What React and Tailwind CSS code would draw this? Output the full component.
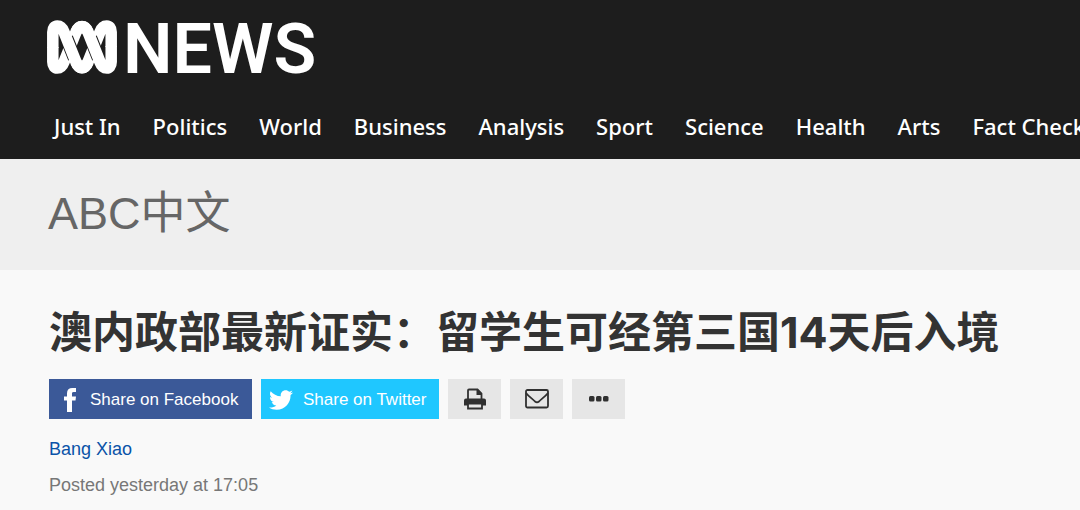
import { FaTwitter } from "react-icons/fa";

const links = ["Just In", "Politics", "World", "Business", "Analysis", "Sport", "Science", "Health", "Arts", "Fact Check"];

function Worm() {
  return (
    <svg viewBox="0 0 70 54" className="h-[54px] w-[70px] shrink-0" fill="none" strokeWidth="11.500" stroke="#fff" aria-hidden="true">
      <path d="M5.800 27V42C5.800 50 14 50 17 42L29 12C32 5 38 5 41 12" />
      <path d="M64.200 27V12C64.200 4 56 4 53 12L41 42C38 49.500 32 49.500 29 42" />
      <path stroke="#1d1d1d" strokeWidth="13.500" d="M19.500 18L27.500 38M43.500 18L51.500 38" />
      <path d="M5.800 28V12C5.800 4 14 4 17 12L29 42C32 49.500 38 49.500 41 42" />
      <path d="M29 12C32 4.500 38 4.500 41 12L53 42C56 50 64.200 50 64.200 42V26" />
    </svg>
  );
}

function FacebookIcon() {
  return (
    <svg viewBox="0 0 12 24" className="h-6 w-3" fill="#fff" aria-hidden="true">
      <path d="M12 0V4H9.500C8.200 4 8 4.700 8 5.800V8.500H12L11.500 12.500H8V24H3V12.500H0V8.500H3V5.200C3 1.800 5 0 8.300 0Z" />
    </svg>
  );
}

function PrintIcon() {
  return (
    <svg viewBox="0 0 24 24" className="h-6 w-6" fill="none" stroke="#303030" strokeWidth="1.800" aria-hidden="true">
      <path d="M5 12V3.500Q5 2.500 6 2.500H14.500L18.500 6.500V12" />
      <path fill="#303030" stroke="none" d="M13.500 2.500H15L19 6.500V8H13.500Z" />
      <path fill="#303030" stroke="none" d="M3 11.500H21A2 2 0 0 1 23 13.500V18.500H1V13.500A2 2 0 0 1 3 11.500Z" />
      <path fill="#e6e6e6" d="M5 16.500H19V21.500H5Z" />
    </svg>
  );
}

function MailIcon() {
  return (
    <svg viewBox="0 0 24 20" className="h-5 w-6" fill="none" stroke="#303030" strokeWidth="1.800" aria-hidden="true">
      <rect x="1" y="1" width="22" height="17.500" rx="1.500" />
      <path d="M1 4C4 8 8 10 10 12.500Q12 14 14 12.500C16 10 20 8 23 4" />
    </svg>
  );
}

function DotsIcon() {
  return (
    <svg viewBox="0 0 20 6" className="h-1.5 w-5" fill="#303030" aria-hidden="true">
      <rect x="0" y="0" width="5.500" height="5.500" rx="1.500" />
      <rect x="7" y="0" width="5.500" height="5.500" rx="1.500" />
      <rect x="14" y="0" width="5.500" height="5.500" rx="1.500" />
    </svg>
  );
}

const tool = "flex w-[53px] items-center justify-center bg-[#e6e6e6]";

export default function App() {
  return (
    <div className="min-h-screen overflow-hidden bg-[#f9f9f9] font-['Liberation_Sans','Noto_Sans_CJK_SC',sans-serif]">
      <header className="bg-[#1d1d1d] pt-5 text-white">
        <a href="#home" className="flex h-[54px] items-center gap-1.5 pl-[47px]">
          <Worm />
          <span className="pt-1 font-[Roboto,sans-serif] text-[70px] leading-[54px] font-semibold">NEWS</span>
        </a>
        <nav className="flex h-[85px] items-center gap-8 pt-[18px] pl-[54px] font-['Noto_Sans',sans-serif] text-[22px] leading-8 font-medium whitespace-nowrap">
          {links.map((label) => (
            <a key={label} href="#section">{label}</a>
          ))}
        </nav>
      </header>
      <div className="bg-[#efefef] px-12 pt-[26px] pb-7">
        <p className="text-[45px] leading-[57px] text-[#666]">ABC中文</p>
      </div>
      <main className="px-[49px] pt-8">
        <h1 className="font-[Inter,'Noto_Sans_CJK_SC',sans-serif] text-[43px] leading-[60px] font-bold text-[#333]">澳内政部最新证实：留学生可经第三国14天后入境</h1>
        <div className="mt-[17px] flex h-10 gap-[9px] text-[17px] text-white">
          <button type="button" className="flex w-[203px] items-center gap-3.5 bg-[#3b5998] pt-0.5 pl-[15px]">
            <FacebookIcon />
            Share on Facebook
          </button>
          <button type="button" className="flex w-[178px] items-center gap-2.5 bg-[#1fc7ff] pt-0.5 pl-2">
            <FaTwitter className="size-6" aria-hidden="true" />
            Share on Twitter
          </button>
          <button type="button" aria-label="Print" className={tool}><PrintIcon /></button>
          <button type="button" aria-label="Email" className={tool}><MailIcon /></button>
          <button type="button" aria-label="More" className={tool}><DotsIcon /></button>
        </div>
        <p className="mt-[18px] text-[18px] leading-6 text-[#0a53a8]"><a href="#author">Bang Xiao</a></p>
        <p className="mt-3 text-[18px] leading-6 text-[#777]">Posted yesterday at 17:05</p>
      </main>
    </div>
  );
}
